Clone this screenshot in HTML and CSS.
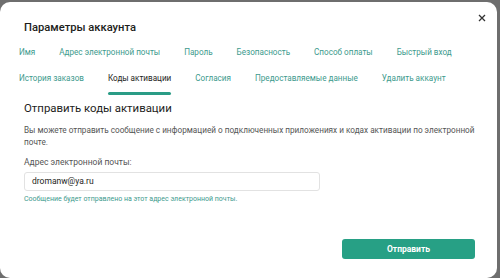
FILE: index.html
```html
<!DOCTYPE html>
<html lang="ru">
<head>
<meta charset="utf-8">
<link rel="stylesheet" href="styles.css">
</head>
<body>
<div class="dialog">
  <header class="head">
    <h1 class="title">Параметры аккаунта</h1>
    <button class="close" aria-label="Закрыть">
      <svg width="8" height="8" viewBox="0 0 8 8"><path d="M1 1L7 7M7 1L1 7" stroke="#333" stroke-width="1.3" fill="none"/></svg>
    </button>
  </header>
  <nav class="tabs">
    <div class="tab-row">
      <a class="tab">Имя</a>
      <a class="tab">Адрес электронной почты</a>
      <a class="tab">Пароль</a>
      <a class="tab">Безопасность</a>
      <a class="tab">Способ оплаты</a>
      <a class="tab">Быстрый вход</a>
    </div>
    <div class="tab-row">
      <a class="tab">История заказов</a>
      <a class="tab active">Коды активации</a>
      <a class="tab">Согласия</a>
      <a class="tab">Предоставляемые данные</a>
      <a class="tab">Удалить аккаунт</a>
    </div>
  </nav>
  <section class="content">
    <h2 class="subtitle">Отправить коды активации</h2>
    <p class="desc">Вы можете отправить сообщение с информацией о подключенных приложениях и кодах активации по электронной почте.</p>
    <label class="label">Адрес электронной почты:</label>
    <div class="input">dromanw@ya.ru</div>
    <p class="hint">Сообщение будет отправлено на этот адрес электронной почты.</p>
  </section>
  <footer class="foot">
    <button class="send">Отправить</button>
  </footer>
</div>
</body>
</html>
```
FILE: styles.css
```css
* { box-sizing: border-box; }
html, body { margin: 0; padding: 0; }
body {
  width: 500px;
  height: 278px;
  background: #6e6e6e;
  overflow: hidden;
  font-family: "Roboto", "Noto Sans", sans-serif;
  color: #1d1d1b;
}
.dialog {
  margin: 2px 3px 0 0;
  height: 276px;
  background: #fff;
  border-radius: 10px;
  padding: 0 0 0 24px;
  display: flex;
  flex-direction: column;
}
.head {
  display: flex;
  align-items: flex-start;
  justify-content: space-between;
  padding: 18px 7px 0 0;
}
.title {
  margin: 0;
  font-size: 11.2px;
  font-weight: 500;
  line-height: 16px;
  color: #1d1d1b;
}
.close {
  border: 0;
  background: none;
  padding: 0;
  margin: -10px 0 0 0;
  width: 16px;
  height: 16px;
  display: flex;
  align-items: center;
  justify-content: center;
}
.tabs {
  margin: 10px 0 0 -5px;
  display: flex;
  flex-direction: column;
}
.tab-row {
  display: flex;
  gap: 24px;
  height: 26px;
}
.tab {
  font-size: 8.15px;
  line-height: 12px;
  color: #3d9a8d;
  position: relative;
  white-space: nowrap;
}
.tab.active {
  color: #1d1d1b;
}
.tab.active::after {
  content: "";
  position: absolute;
  left: 0;
  right: 0;
  top: 20px;
  height: 3px;
  background: #2a9c86;
  border-radius: 2px;
}
.content {
  padding-top: 2px;
}
.subtitle {
  margin: 0;
  font-size: 11.4px;
  font-weight: 400;
  line-height: 16px;
  color: #1d1d1b;
}
.desc {
  margin: 8px 0 0 0;
  width: 460px;
  font-size: 8.2px;
  line-height: 12px;
  color: #555;
}
.label {
  display: block;
  margin-top: 8px;
  font-size: 8.5px;
  line-height: 12px;
  color: #555;
}
.input {
  margin-top: 4px;
  width: 296px;
  height: 19px;
  border: 1px solid #e2e2e2;
  border-radius: 3px;
  padding: 0 0 0 7px;
  font-size: 8.5px;
  line-height: 17px;
  color: #1d1d1b;
}
.hint {
  margin: 3px 0 0 0;
  font-size: 7px;
  line-height: 10px;
  color: #3d9a8d;
}
.foot {
  display: flex;
  justify-content: flex-end;
  padding: 35px 22px 0 0;
}
.send {
  width: 133px;
  height: 20px;
  border: 0;
  border-radius: 3px;
  background: #27a085;
  color: #fff;
  font-family: "Roboto", "Noto Sans", sans-serif;
  font-size: 8.5px;
  font-weight: 700;
}
```
